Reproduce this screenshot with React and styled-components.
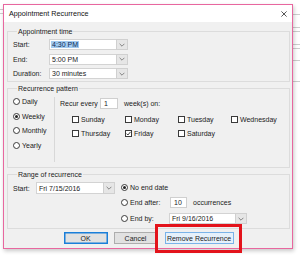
import React from 'react';
import styled, { createGlobalStyle } from 'styled-components';

const GlobalStyle = createGlobalStyle`
  html, body {
    margin: 0;
    padding: 0;
    background: #fff;
  }
  body {
    font-family: "Liberation Sans", Arial, sans-serif;
    font-size: 7px;
    color: #1b1b1b;
  }
`;

// calendar grid lines peeking out behind the dialog
const gridLine = (x, y, w) => `linear-gradient(#cdcdcd, #cdcdcd) ${x}px ${y}px / ${w}px 1px no-repeat`;
const deskLines = [
  ...[14, 27, 31, 44, 48, 60, 81].map(y => gridLine(293, y, 7)),
  ...[9, 13].map(y => gridLine(0, y, 3)),
].join(', ');

const Desk = styled.div`
  width: 300px;
  height: 256px;
  box-sizing: border-box;
  padding: 4px 0 0 3px;
  background: ${deskLines}, #fff;
  overflow: hidden;
`;

const Dialog = styled.div`
  width: 290px;
  height: 245px;
  box-sizing: border-box;
  border: 1px solid #e8679f;
  box-shadow: 1px 2px 4px rgba(0, 0, 0, 0.22);
  background: #f0f0f0;
  display: flex;
  flex-direction: column;
`;

const TitleBar = styled.div`
  height: 17px;
  flex: none;
  background: #fff;
  display: flex;
  align-items: center;
  justify-content: space-between;
  padding: 0 5px 0 5px;
  font-size: 7.2px;
  color: #111;
`;

const Body = styled.div`
  flex: 1;
  padding: 5px 2px 0 3px;
  display: flex;
  flex-direction: column;
`;

const Group = styled.fieldset`
  margin: 0;
  min-width: 0;
  box-sizing: border-box;
  height: ${p => p.$h}px;
  padding: ${p => p.$pt}px 5px 0 5px;
  border: 1px solid #dcdcdc;
  & + & {
    margin-top: 1.5px;
  }
`;

const Legend = styled.legend`
  margin-left: 4px;
  padding: 0 1px;
  line-height: 9px;
  font-size: 7px;
  color: #1b1b1b;
`;

const TimeGrid = styled.div`
  display: grid;
  grid-template-columns: 36px auto;
  grid-auto-rows: 11px;
  row-gap: 3.5px;
  align-items: center;
`;

const ComboBox = styled.div`
  display: flex;
  width: ${p => p.$w}px;
  height: ${p => p.$h}px;
`;

const ComboField = styled.div`
  flex: 1;
  background: #fff;
  border: 1px solid #d3d3d3;
  border-right: none;
  display: flex;
  align-items: center;
  padding-left: 2px;
  white-space: nowrap;
`;

const ComboButton = styled.div`
  width: 10px;
  flex: none;
  background: #e6e6e6;
  border: 1px solid #d0d0d0;
  display: flex;
  align-items: center;
  justify-content: center;
`;

const Selected = styled.span`
  background: #a3cbf0;
  color: #0d2b55;
  padding: 0 1px;
  margin-left: -1px;
`;

const Chevron = () => (
  <svg width="6" height="4" viewBox="0 0 6 4">
    <polyline points="0.6,0.8 3,3.2 5.4,0.8" fill="none" stroke="#6b6b6b" strokeWidth="0.8" />
  </svg>
);

const Combo = ({ w = 79, h = 11, children }) => (
  <ComboBox $w={w} $h={h}>
    <ComboField>{children}</ComboField>
    <ComboButton><Chevron /></ComboButton>
  </ComboBox>
);

const PatternRow = styled.div`
  display: flex;
`;

const RadioColumn = styled.div`
  width: 42px;
  display: flex;
  flex-direction: column;
`;

const OptionRow = styled.div`
  display: flex;
  align-items: center;
  height: ${p => p.$h || 14.5}px;
`;

const Radio = styled.span`
  width: 7px;
  height: 7px;
  box-sizing: border-box;
  flex: none;
  border-radius: 50%;
  border: 1px solid #3a3a3a;
  background: #fff;
  display: inline-flex;
  align-items: center;
  justify-content: center;
  &::after {
    content: "";
    display: ${p => (p.$on ? 'block' : 'none')};
    width: 3px;
    height: 3px;
    border-radius: 50%;
    background: #222;
  }
`;

const OptionText = styled.span`
  margin-left: 2px;
  width: ${p => (p.$w ? `${p.$w}px` : 'auto')};
  white-space: nowrap;
`;

const Option = ({ on, w, h, children }) => (
  <OptionRow $h={h}>
    <Radio $on={on} />
    <OptionText $w={w}>{children}</OptionText>
  </OptionRow>
);

const Divider = styled.div`
  width: 1px;
  height: 65px;
  margin: 2.5px 5px 0 3px;
  background: #d8d8d8;
`;

const WeekPanel = styled.div`
  display: flex;
  flex-direction: column;
`;

const RecurRow = styled.div`
  display: flex;
  align-items: center;
  height: 11px;
  margin-top: 3.5px;
`;

const FieldLabel = styled.span`
  width: ${p => p.$w}px;
  flex: none;
  white-space: nowrap;
`;

const NumberBox = styled.div`
  width: ${p => p.$w}px;
  height: 11px;
  box-sizing: border-box;
  background: #fff;
  border: 1px solid #cfcfcf;
  padding-left: 3px;
  display: flex;
  align-items: center;
  flex: none;
`;

const AfterText = styled.span`
  margin-left: 6px;
  white-space: nowrap;
`;

const DayGrid = styled.div`
  display: grid;
  grid-template-columns: repeat(4, 53px);
  grid-auto-rows: 8px;
  row-gap: 6px;
  margin-top: 6px;
  padding-left: 12px;
`;

const Day = styled.label`
  display: flex;
  align-items: center;
  white-space: nowrap;
`;

const Box = styled.span`
  width: 7px;
  height: 7px;
  box-sizing: border-box;
  flex: none;
  border: 1px solid #3a3a3a;
  background: #fff;
  margin-right: 2px;
  display: inline-flex;
  align-items: center;
  justify-content: center;
`;

const Check = () => (
  <svg width="5" height="5" viewBox="0 0 5 5">
    <polyline points="0.5,2.6 1.9,4 4.5,0.9" fill="none" stroke="#222" strokeWidth="0.9" />
  </svg>
);

const RangeRow = styled.div`
  display: flex;
`;

const StartPart = styled.div`
  display: flex;
  align-items: center;
  height: 12px;
  margin-top: 1.5px;
`;

const EndColumn = styled.div`
  display: flex;
  flex-direction: column;
  gap: 3.75px;
  margin-left: 6px;
  margin-top: 0.5px;
`;

const ButtonRow = styled.div`
  display: flex;
  justify-content: center;
  gap: 6px;
  margin-top: 3px;
`;

const Button = styled.button`
  width: ${p => p.$w}px;
  height: 12px;
  padding: 0;
  font: inherit;
  font-size: 7px;
  color: #1b1b1b;
  background: ${p => (p.$hover ? '#e5f1fb' : '#e1e1e1')};
  border: 1px solid ${p => (p.$default ? '#1a7fd9' : p.$hover ? '#7ab3e8' : '#adadad')};
  box-shadow: ${p => (p.$default ? 'inset 0 0 0 0.5px #1a7fd9' : 'none')};
`;

const Marked = styled.div`
  position: relative;
  margin-left: 1px;
  &::after {
    content: "";
    position: absolute;
    top: -8px;
    bottom: -9px;
    left: -10px;
    right: -8px;
    border: 3px solid #e3131b;
    pointer-events: none;
  }
`;

const CloseIcon = () => (
  <svg width="6" height="6" viewBox="0 0 6 6">
    <path d="M0.4 0.4 L5.6 5.6 M5.6 0.4 L0.4 5.6" stroke="#444" strokeWidth="0.9" />
  </svg>
);

const days = [
  ['Sunday', false], ['Monday', false], ['Tuesday', false], ['Wednesday', false],
  ['Thursday', false], ['Friday', true], ['Saturday', false],
];

export default function App() {
  return (
    <>
      <GlobalStyle />
      <Desk>
        <Dialog>
          <TitleBar>
            <span>Appointment Recurrence</span>
            <CloseIcon />
          </TitleBar>
          <Body>
            <Group $h={55} $pt={3}>
              <Legend>Appointment time</Legend>
              <TimeGrid>
                <span>Start:</span>
                <Combo><Selected>4:30 PM</Selected></Combo>
                <span>End:</span>
                <Combo>5:00 PM</Combo>
                <span>Duration:</span>
                <Combo>30 minutes</Combo>
              </TimeGrid>
            </Group>

            <Group $h={84.5} $pt={2}>
              <Legend>Recurrence pattern</Legend>
              <PatternRow>
                <RadioColumn>
                  <Option>Daily</Option>
                  <Option on>Weekly</Option>
                  <Option>Monthly</Option>
                  <Option>Yearly</Option>
                </RadioColumn>
                <Divider />
                <WeekPanel>
                  <RecurRow>
                    <FieldLabel $w={40}>Recur every</FieldLabel>
                    <NumberBox $w={18}>1</NumberBox>
                    <AfterText>week(s) on:</AfterText>
                  </RecurRow>
                  <DayGrid>
                    {days.map(([name, on]) => (
                      <Day key={name}>
                        <Box>{on && <Check />}</Box>
                        {name}
                      </Day>
                    ))}
                  </DayGrid>
                </WeekPanel>
              </PatternRow>
            </Group>

            <Group $h={59.5} $pt={2}>
              <Legend>Range of recurrence</Legend>
              <RangeRow>
                <StartPart>
                  <FieldLabel $w={23}>Start:</FieldLabel>
                  <Combo h={12}>Fri 7/15/2016</Combo>
                </StartPart>
                <EndColumn>
                  <Option on h={12}>No end date</Option>
                  <OptionRow $h={12}>
                    <Radio />
                    <OptionText $w={40}>End after:</OptionText>
                    <NumberBox $w={17}>10</NumberBox>
                    <AfterText>occurrences</AfterText>
                  </OptionRow>
                  <OptionRow $h={12}>
                    <Radio />
                    <OptionText $w={39}>End by:</OptionText>
                    <Combo w={78}>Fri 9/16/2016</Combo>
                  </OptionRow>
                </EndColumn>
              </RangeRow>
            </Group>

            <ButtonRow>
              <Button $w={44} $default>OK</Button>
              <Button $w={44}>Cancel</Button>
              <Marked>
                <Button $w={69} $hover>Remove Recurrence</Button>
              </Marked>
            </ButtonRow>
          </Body>
        </Dialog>
      </Desk>
    </>
  );
}
